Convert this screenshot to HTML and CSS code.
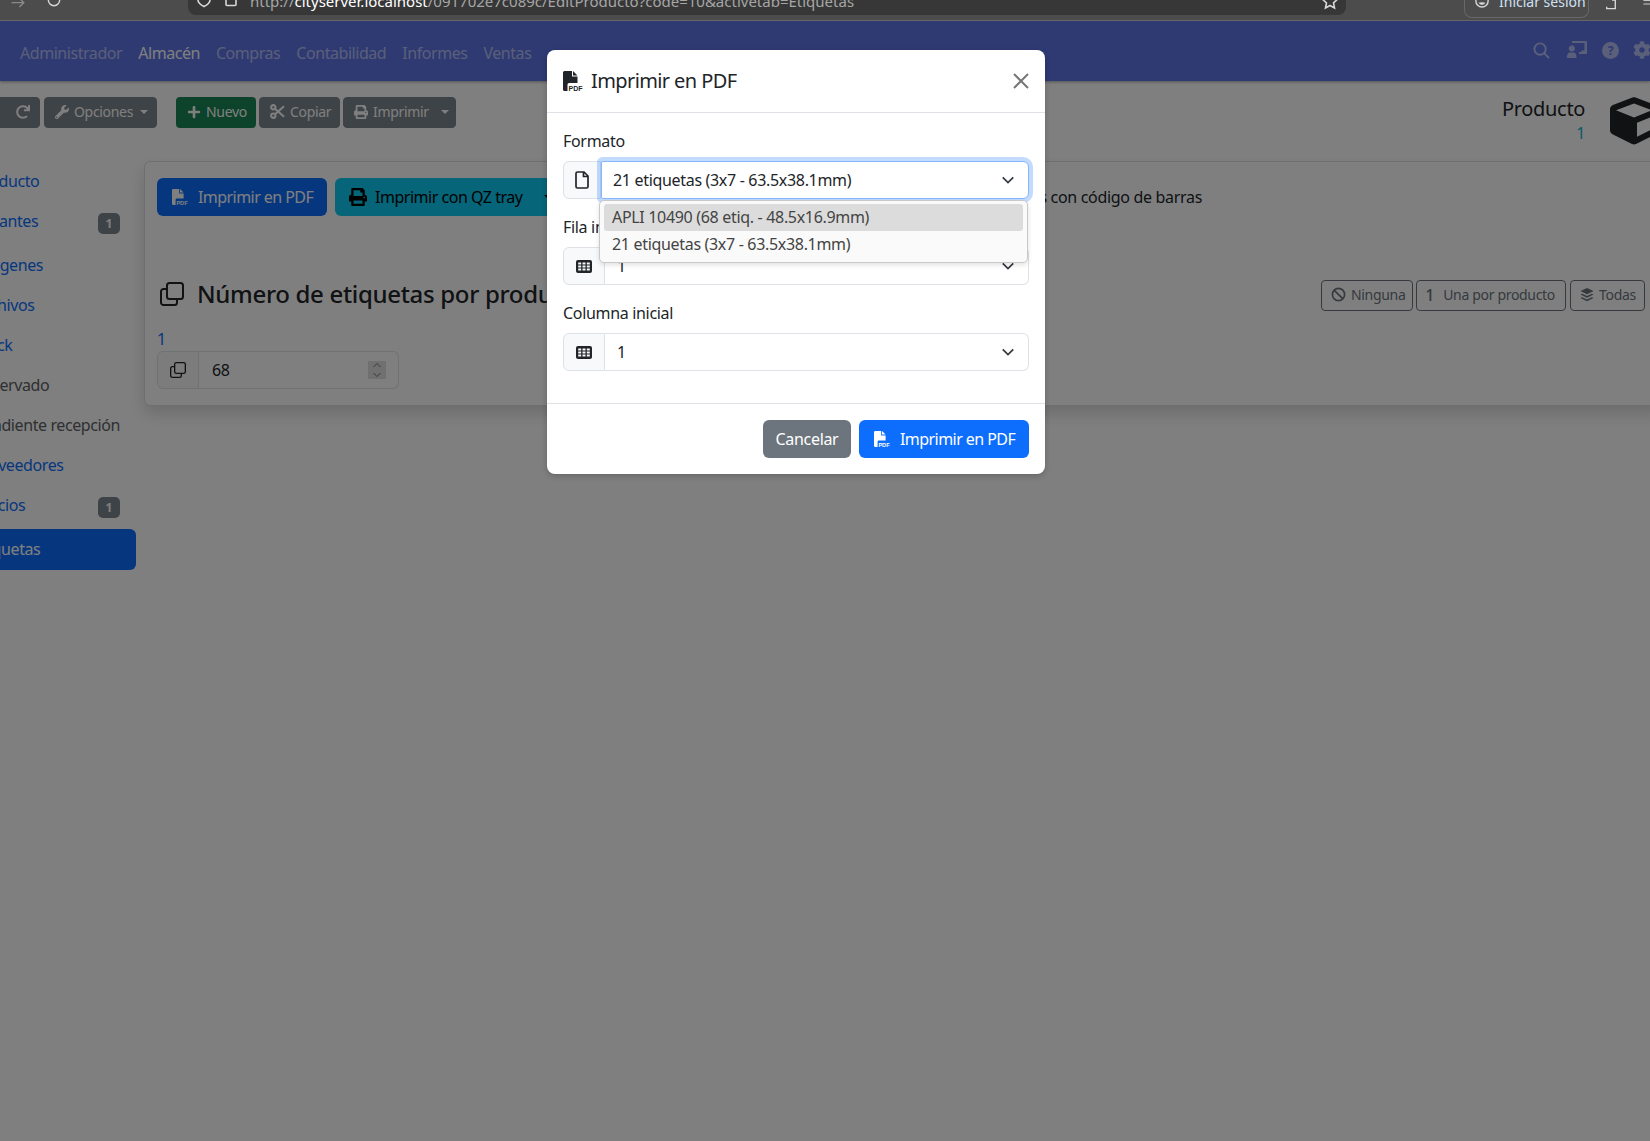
FILE: index.html
```html
<!DOCTYPE html>
<html lang="es">
<head>
<meta charset="utf-8">
<title>Producto</title>
<link rel="stylesheet" href="styles.css">
</head>
<body>
<header class="chrome">
  <svg class="c-ico c-arrow" viewBox="0 0 16 16"><path d="M0 3h14M9-2l5 5-5 5"/></svg>
  <svg class="c-ico c-reload" viewBox="0 0 16 16"><circle cx="8" cy="0" r="6.5"/></svg>
  <div class="urlbar">
    <svg class="c-ico c-shield" viewBox="0 0 16 16"><path d="M2-6h12v6c0 3-3 5-6 6.500C5 5 2 3 2 0z"/></svg>
    <svg class="c-ico c-page" viewBox="0 0 12 16"><path d="M1-4v8.500q0 1 1 1h8q1 0 1-1V-4"/></svg>
    <span class="url">http://<b>cityserver.localhost</b>/091702e7c089c/EditProducto?code=10&amp;activetab=Etiquetas</span>
    <svg class="c-ico c-star" viewBox="0 0 16 16"><path d="M8-6l2.200 5 5 .5-3.700 3.400 1 5L8 5.500 3.500 8l1-5L.8-.5l5-.5z"/></svg>
  </div>
  <div class="login"><svg class="c-ico c-user" viewBox="0 0 16 16"><circle cx="8" cy="1" r="7"/><path class="c-fill" d="M4 3q4 5 8 0-4-1-8 0z"/></svg><span>Iniciar sesión</span></div>
  <svg class="c-ico c-ext" viewBox="0 0 14 14"><path d="M9-2v2h3v10H2V8"/></svg>
  <svg class="c-ico c-menu" viewBox="0 0 16 14"><path d="M0 1h16M0 7h16"/></svg>
</header>

<div class="app">
  <nav class="navbar">
    <a class="nav-link">Administrador</a>
    <a class="nav-link active">Almacén</a>
    <a class="nav-link">Compras</a>
    <a class="nav-link">Contabilidad</a>
    <a class="nav-link">Informes</a>
    <a class="nav-link">Ventas</a>
    <div class="nav-icons">
      <svg class="n-ico n-search" viewBox="0 0 18 18"><circle cx="7.500" cy="7.500" r="6"/><path d="M12 12l5 5"/></svg>
      <svg class="n-ico-f n-board" viewBox="0 0 20 18"><circle cx="4.800" cy="7.500" r="3"/><path d="M0 16.500q0-5 3-5h3.500q3 0 3 5v.5H0z"/><path d="M5 0h14q1 0 1 1v11q0 1-1 1h-7v-2h2.500v-1.500h3V2H5z"/></svg>
      <svg class="n-ico-f n-help" viewBox="0 0 18 18"><circle cx="9" cy="9" r="9"/><text class="n-q" x="9" y="13.500">?</text></svg>
      <svg class="n-ico-f n-cog" viewBox="0 0 512 512"><path d="M487.4 315.7l-42.600-24.600c4.300-23.200 4.300-47 0-70.200l42.600-24.600c4.900-2.800 7.100-8.600 5.500-14-11.100-35.600-30-67.800-54.700-94.600-3.800-4.100-10-5.100-14.800-2.300L380.800 110c-17.900-15.400-38.500-27.300-60.800-35.100V25.800c0-5.600-3.900-10.500-9.400-11.700-36.700-8.200-74.300-7.800-109.200 0-5.500 1.200-9.400 6.100-9.400 11.700V75c-22.200 7.900-42.800 19.800-60.800 35.100L88.700 85.500c-4.900-2.800-11-1.900-14.800 2.300-24.700 26.700-43.600 58.900-54.700 94.600-1.700 5.400.6 11.200 5.500 14L67.300 221c-4.300 23.200-4.300 47 0 70.200l-42.600 24.600c-4.900 2.800-7.100 8.600-5.500 14 11.100 35.600 30 67.800 54.700 94.600 3.800 4.100 10 5.100 14.800 2.300l42.600-24.600c17.900 15.400 38.500 27.300 60.800 35.100v49.200c0 5.600 3.900 10.500 9.400 11.700 36.700 8.200 74.300 7.800 109.200 0 5.500-1.200 9.400-6.100 9.400-11.700v-49.200c22.200-7.900 42.800-19.800 60.800-35.100l42.600 24.600c4.900 2.800 11 1.900 14.800-2.300 24.700-26.700 43.600-58.900 54.700-94.600 1.500-5.500-.7-11.300-5.600-14.100zM256 336c-44.100 0-80-35.900-80-80s35.900-80 80-80 80 35.900 80 80-35.900 80-80 80z"/></svg>
    </div>
  </nav>

  <main class="page">
    <div class="toolbar">
      <button class="btn btn-dark btn-sm btn-refresh"><svg class="ico" viewBox="0 0 512 512"><path d="M500.330 0h-47.410a12 12 0 0 0-12 12.570l4 82.760A247.420 247.420 0 0 0 256 8C119.340 8 8.900 119.530 8 256.190 7.100 393.070 117.820 504 256 504a247.100 247.100 0 0 0 166.180-63.910 12 12 0 0 0 .48-17.430l-34-34a12 12 0 0 0-16.380-.55A176 176 0 1 1 402.100 157.800l-101.530-4.870a12 12 0 0 0-12.570 12v47.410a12 12 0 0 0 12 12h200.330a12 12 0 0 0 12-12V12a12 12 0 0 0-12-12z"/></svg></button>
      <button class="btn btn-dark btn-sm btn-opciones"><svg class="ico" viewBox="0 0 512 512"><path d="M507.730 109.100c-2.240-9.030-13.540-12.090-20.120-5.510l-74.360 74.360-67.880-11.310-11.310-67.880 74.360-74.360c6.620-6.620 3.430-17.900-5.660-20.160-47.380-11.740-99.550.91-136.580 37.930-39.640 39.640-50.550 97.100-34.050 147.200L18.740 402.760c-24.990 24.990-24.990 65.510 0 90.500 24.990 24.990 65.510 24.990 90.500 0l213.210-213.210c50.120 16.710 107.470 5.680 147.370-34.220 37.070-37.070 49.700-89.320 37.910-136.730zM64 472c-13.250 0-24-10.750-24-24 0-13.260 10.750-24 24-24s24 10.740 24 24c0 13.250-10.750 24-24 24z"/></svg>Opciones<i class="caret"></i></button>
      <button class="btn btn-green btn-sm btn-nuevo"><svg class="ico" viewBox="0 0 448 512"><path d="M416 208H272V64c0-17.670-14.330-32-32-32h-32c-17.670 0-32 14.330-32 32v144H32c-17.670 0-32 14.330-32 32v32c0 17.670 14.330 32 32 32h144v144c0 17.670 14.330 32 32 32h32c17.670 0 32-14.330 32-32V304h144c17.670 0 32-14.330 32-32v-32c0-17.670-14.330-32-32-32z"/></svg>Nuevo</button>
      <button class="btn btn-dark btn-sm btn-copiar"><svg class="ico-s ico-cut" viewBox="0 0 16 16"><circle cx="3.500" cy="3.500" r="2.300"/><circle cx="3.500" cy="12.500" r="2.300"/><path d="M5.300 5l9.700 8.500M5.300 11L15 2.500"/></svg>Copiar</button>
      <button class="btn btn-dark btn-sm btn-imprimir"><svg class="ico" viewBox="0 0 512 512"><path d="M448 192V77.250c0-8.490-3.370-16.620-9.370-22.630L393.370 9.370c-6-6-14.140-9.370-22.630-9.370H96C78.330 0 64 14.330 64 32v160c-35.350 0-64 28.650-64 64v112c0 8.840 7.160 16 16 16h48v96c0 17.670 14.330 32 32 32h320c17.670 0 32-14.330 32-32v-96h48c8.840 0 16-7.160 16-16V256c0-35.350-28.650-64-64-64zm-64 256H128v-96h256v96zm0-224H128V64h192v48c0 8.840 7.160 16 16 16h48v96zm48 72c-13.250 0-24-10.750-24-24 0-13.260 10.750-24 24-24s24 10.740 24 24c0 13.250-10.750 24-24 24z"/></svg>Imprimir<i class="caret caret-far"></i></button>
      <div class="doc-title">
        <div class="doc-text"><div class="doc-name">Producto</div><div class="doc-code">1</div></div>
        <svg class="cube" viewBox="0 0 512 512"><path d="M239.100 6.300l-208 78c-18.700 7-31.100 25-31.100 45v225.100c0 18.200 10.300 34.800 26.500 42.900l208 104c13.500 6.800 29.400 6.800 42.900 0l208-104c16.300-8.100 26.500-24.800 26.500-42.900V129.300c0-20-12.400-37.900-31.100-44.900l-208-78C262 2.200 250 2.200 239.100 6.300zM256 68.400l192 72v1.100l-192 78-192-78v-1.100l192-72zm32 356V275.500l160-65v133.900l-160 80z"/></svg>
      </div>
    </div>

    <div class="columns">
      <ul class="side">
        <li class="side-item link"><span>Producto</span></li>
        <li class="side-item link tall nudge"><span>Variantes</span><b class="badge">1</b></li>
        <li class="side-item link nudge"><span>Imágenes</span></li>
        <li class="side-item link"><span>Archivos</span></li>
        <li class="side-item link"><span>Stock</span></li>
        <li class="side-item"><span>Reservado</span></li>
        <li class="side-item"><span>Pendiente recepción</span></li>
        <li class="side-item link"><span>Proveedores</span></li>
        <li class="side-item link tall"><span>Precios</span><b class="badge">1</b></li>
        <li class="side-item current"><span>Etiquetas</span></li>
      </ul>

      <section class="panel">
        <div class="print-row">
          <button class="btn btn-primary btn-pdf">
            <svg class="pdf" viewBox="0 0 20 20"><path d="M1.500 0H9v5.500h5.500V12H6q-1.500 0-1.500 1.500V20H1.500Q0 20 0 18.500V1.500Q0 0 1.500 0zM10 0l4.500 4.500H10z"/><text x="5.500" y="19.500">PDF</text></svg>Imprimir en PDF</button>
          <button class="btn btn-info btn-qz"><svg class="ico-l" viewBox="0 0 512 512"><path d="M448 192V77.250c0-8.490-3.370-16.620-9.370-22.630L393.370 9.370c-6-6-14.140-9.370-22.630-9.370H96C78.330 0 64 14.330 64 32v160c-35.350 0-64 28.650-64 64v112c0 8.840 7.160 16 16 16h48v96c0 17.670 14.330 32 32 32h320c17.670 0 32-14.330 32-32v-96h48c8.840 0 16-7.160 16-16V256c0-35.350-28.650-64-64-64zm-64 256H128v-96h256v96zm0-224H128V64h192v48c0 8.840 7.160 16 16 16h48v96zm48 72c-13.250 0-24-10.750-24-24 0-13.260 10.750-24 24-24s24 10.740 24 24c0 13.250-10.750 24-24 24z"/></svg>Imprimir con QZ tray<i class="caret caret-dark"></i></button>
          <span class="hint">Imprimir etiquetas con código de barras</span>
        </div>

        <div class="title-row">
          <h2 class="heading"><svg class="clone clone-l" viewBox="0 0 24 24"><rect x="7" y="1" width="16" height="16" rx="2.500"/><path d="M7 7H3.500A2.500 2.500 0 0 0 1 9.500v11A2.500 2.500 0 0 0 3.500 23h11a2.500 2.500 0 0 0 2.500-2.500V17"/></svg>Número de etiquetas por producto</h2>
          <div class="qty-btns">
            <button class="btn btn-outline btn-sm"><svg class="ico-s" viewBox="0 0 16 16"><circle cx="8" cy="8" r="6.500"/><path d="M3.500 3.500l9 9"/></svg>Ninguna</button>
            <button class="btn btn-outline btn-sm"><span class="one">1</span>Una por producto</button>
            <button class="btn btn-outline btn-sm"><svg class="ico" viewBox="0 0 16 16"><path d="M8 0l7.500 3.500L8 7 .5 3.500zM2.500 6.500L8 9l5.500-2.500 2 1L8 11 .5 7.500zM2.500 10.500L8 13l5.500-2.500 2 1L8 15 .5 11.500z"/></svg>Todas</button>
          </div>
        </div>

        <a class="qty-label">1</a>
        <div class="input-group qty">
          <span class="addon"><svg class="clone" viewBox="0 0 24 24"><rect x="7" y="1" width="16" height="16" rx="2.500"/><path d="M7 7H3.500A2.500 2.500 0 0 0 1 9.500v11A2.500 2.500 0 0 0 3.500 23h11a2.500 2.500 0 0 0 2.500-2.500V17"/></svg></span>
          <span class="field">68<span class="spin"><svg viewBox="0 0 10 18"><path d="M1.500 6L5 2.500 8.500 6M1.500 12L5 15.500 8.500 12"/></svg></span></span>
        </div>
      </section>
    </div>
  </main>

  <div class="backdrop">
    <div class="modal">
      <div class="modal-head">
        <svg class="pdf pdf-dark" viewBox="0 0 20 20"><path d="M1.500 0H9v5.500h5.500V12H6q-1.500 0-1.500 1.500V20H1.500Q0 20 0 18.500V1.500Q0 0 1.500 0zM10 0l4.500 4.500H10z"/><text x="5.500" y="19.500">PDF</text></svg>
        <h5 class="modal-title">Imprimir en PDF</h5>
        <svg class="close" viewBox="0 0 16 16"><path d="M1 1l14 14M15 1L1 15"/></svg>
      </div>
      <div class="modal-body">
        <label class="form-label">Formato</label>
        <div class="input-group open">
          <span class="addon addon-narrow"><svg class="file" viewBox="0 0 14 18"><path d="M2.500 1H9l4 4v10.500a1.500 1.500 0 0 1-1.500 1.500h-9A1.500 1.500 0 0 1 1 15.500v-13A1.500 1.500 0 0 1 2.500 1zM8.500 1v4.500H13"/></svg></span>
          <span class="select focus">21 etiquetas (3x7 - 63.5x38.1mm)<svg class="chev" viewBox="0 0 16 16"><path d="M2 5l6 6 6-6"/></svg></span>
          <div class="options">
            <div class="option selected">APLI 10490 (68 etiq. - 48.5x16.9mm)</div>
            <div class="option">21 etiquetas (3x7 - 63.5x38.1mm)</div>
          </div>
        </div>
        <label class="form-label">Fila inicial</label>
        <div class="input-group">
          <span class="addon"><svg class="table" viewBox="0 0 16 13"><rect width="16" height="13" rx="2"/><path class="cells" d="M2.200 2.600h3v1.800h-3zM6.500 2.600h3v1.800h-3zM10.800 2.600h3v1.800h-3zM2.200 5.600h3v1.800h-3zM6.500 5.600h3v1.800h-3zM10.800 5.600h3v1.800h-3zM2.200 8.600h3v1.800h-3zM6.500 8.600h3v1.800h-3zM10.800 8.600h3v1.800h-3z"/></svg></span>
          <span class="select">1<svg class="chev" viewBox="0 0 16 16"><path d="M2 5l6 6 6-6"/></svg></span>
        </div>
        <label class="form-label">Columna inicial</label>
        <div class="input-group">
          <span class="addon"><svg class="table" viewBox="0 0 16 13"><rect width="16" height="13" rx="2"/><path class="cells" d="M2.200 2.600h3v1.800h-3zM6.500 2.600h3v1.800h-3zM10.800 2.600h3v1.800h-3zM2.200 5.600h3v1.800h-3zM6.500 5.600h3v1.800h-3zM10.800 5.600h3v1.800h-3zM2.200 8.600h3v1.800h-3zM6.500 8.600h3v1.800h-3zM10.800 8.600h3v1.800h-3z"/></svg></span>
          <span class="select">1<svg class="chev" viewBox="0 0 16 16"><path d="M2 5l6 6 6-6"/></svg></span>
        </div>
      </div>
      <div class="modal-foot">
        <button class="btn btn-gray">Cancelar</button>
        <button class="btn btn-blue"><svg class="pdf" viewBox="0 0 20 20"><path d="M1.500 0H9v5.500h5.500V12H6q-1.500 0-1.500 1.500V20H1.500Q0 20 0 18.500V1.500Q0 0 1.500 0zM10 0l4.500 4.500H10z"/><text x="5.500" y="19.500">PDF</text></svg>Imprimir en PDF</button>
      </div>
    </div>
  </div>
</div>
</body>
</html>
```

FILE: styles.css
```css
* { box-sizing: border-box; }
html, body { margin: 0; height: 1141px; overflow: hidden; }
body { font-family: "Noto Sans", "Open Sans", sans-serif; font-size: 16px; line-height: 24px; letter-spacing: -0.02em; color: #212529; background: #fff; }

/* browser chrome, cut by the top of the shot */
.chrome { height: 21px; background: #4c4c4c; border-bottom: 1px solid #666; display: flex; align-items: flex-start; overflow: hidden; }
.c-ico { fill: none; stroke: #d8d8d8; stroke-width: 1.6; overflow: visible; flex: none; }
.c-fill { fill: #d8d8d8; stroke: none; }
.c-arrow { width: 15px; height: 14px; margin-left: 11px; stroke: #8a8a8a; }
.c-reload { width: 16px; height: 14px; margin-left: 20px; }
.urlbar { flex: none; margin-left: 126px; width: 1158px; height: 15px; background: #373737; border-radius: 0 0 8px 8px; display: flex; align-items: flex-end; padding: 0 0 6px 8px; overflow: hidden; }
.c-shield { width: 16px; height: 16px; margin-bottom: -6px; align-self: flex-start; }
.c-page { width: 12px; height: 16px; margin-left: 13px; align-self: flex-start; margin-bottom: -6px; }
.url { margin-left: 13px; font-size: 15px; line-height: 16px; color: #a6a6a6; white-space: nowrap; letter-spacing: 0; }
.url b { font-weight: 400; color: #fff; }
.c-star { width: 16px; height: 16px; margin-left: auto; margin-right: 8px; align-self: flex-start; }
.login { flex: none; margin-left: 118px; width: 125px; height: 18px; border: 1px solid #686868; border-top: 0; border-radius: 0 0 8px 8px; display: flex; align-items: flex-end; padding: 0 0 8px 9px; color: #cfe0f5; font-size: 14px; line-height: 14px; overflow: hidden; white-space: nowrap; }
.c-user { width: 16px; height: 14px; margin-right: 9px; align-self: flex-start; }
.login span { letter-spacing: 0; }
.c-ext { width: 14px; height: 12px; margin-left: 15px; }
.c-menu { width: 16px; height: 8px; margin-left: 22px; }

/* app */
.app { position: relative; height: 1120px; overflow: hidden; background: #fff; }
.navbar { height: 60px; background: #5e74e6; display: flex; align-items: center; padding: 4px 0 0 12px; box-shadow: 0 1px 3px rgba(0,0,0,.35); }
.nav-link { padding: 0 8px; color: rgba(255,255,255,.55); white-space: nowrap; letter-spacing: -0.028em; }
.nav-link.active { color: #fff; }
.nav-icons { margin-left: auto; display: flex; align-items: center; margin-right: -1px; padding-bottom: 6px; }
.n-ico, .n-ico-f { flex: none; overflow: visible; }
.n-ico { fill: none; stroke: rgba(255,255,255,.55); stroke-width: 2; }
.n-ico-f { fill: rgba(255,255,255,.55); }
.n-search { width: 17px; height: 17px; margin-right: 17px; }
.n-board { width: 20px; height: 18px; margin-right: 15px; }
.n-help { width: 17px; height: 17px; margin-right: 14px; }
.n-cog { width: 18px; height: 18px; }
.n-q { fill: #5e74e6; font: 700 13px "Noto Sans", sans-serif; text-anchor: middle; }

.page { margin-left: -42px; width: 1700px; padding-top: 16px; }

.btn { font: inherit; letter-spacing: inherit; height: 38px; border: 1px solid transparent; border-radius: 6px; display: inline-flex; align-items: center; white-space: nowrap; padding: 0 12px; flex: none; color: #fff; }
.btn-sm { height: 31px; font-size: 14px; padding: 0 10px 2px; border-radius: 4px; }
.btn-dark { background: #7b848c; color: #fff; border-color: #7b848c; }
.toolbar .btn-dark { background: #7d868e; }
.btn-green { background: #198754; }
.ico { width: 14px; height: 14px; fill: currentColor; margin-right: 5px; flex: none; }
.ico-s { width: 15px; height: 15px; fill: none; stroke: currentColor; stroke-width: 1.800; margin-right: 5px; flex: none; }
.ico-cut { stroke-width: 2.200; }
.caret { width: 0; height: 0; border: 4px solid transparent; border-top-color: currentColor; border-bottom: 0; margin-left: 7px; flex: none; }
.caret-far { margin-left: auto; margin-right: -4px; }
.caret-dark { color: #000; margin-left: 22px; }

.toolbar { display: flex; align-items: flex-start; height: 64px; }
.btn-refresh { width: 82px; justify-content: flex-end; padding-right: 9px; margin-right: 4px; }
.btn-refresh .ico { margin: 0; }
.btn-opciones { width: 113px; margin-right: 19px; }
.btn-nuevo { width: 80px; margin-right: 3px; padding-left: 10px; }
.btn-copiar { width: 81px; margin-right: 3px; }
.btn-imprimir { width: 113px; }
.doc-title { margin-left: 1046px; display: flex; align-items: flex-start; }
.doc-text { text-align: right; width: 83px; }
.doc-name { font-size: 20px; line-height: 24px; white-space: nowrap; }
.doc-code { line-height: 24px; color: #14b5d0; }
.cube { width: 48px; height: 48px; margin-left: 25px; fill: #212529; flex: none; }

.columns { display: flex; align-items: flex-start; }
.side { list-style: none; margin: 0; padding: 0; width: 178px; flex: none; margin-right: 8px; }
.side-item { height: 40px; padding: 8px 16px; display: flex; justify-content: space-between; align-items: flex-start; color: #5c6166; white-space: nowrap; letter-spacing: -0.025em; }
.side-item.link { color: #0d6efd; }
.side-item.nudge { padding-left: 13.500px; }
.side-item.tall { height: 44px; padding-right: 16px; }
.side-item.current { height: 41px; background: #0d6efd; color: #fff; border-radius: 0 6px 6px 0; }
.badge { width: 22px; height: 21px; margin-top: 4px; border-radius: 5px; background: #7d868e; color: #fff; font-size: 12px; line-height: 21px; font-weight: 700; text-align: center; letter-spacing: 0; }

.panel { width: 1520px; flex: none; height: 245px; border: 1px solid rgba(0,0,0,.125); border-radius: 6px; padding: 16px 12px; background: #fff; box-shadow: 0 8px 16px rgba(0,0,0,.15); }
.print-row { display: flex; align-items: center; width: 1045px; height: 38px; }
.btn-primary { background: #0d6efd; color: #fff; }
.btn-pdf { width: 170px; margin-right: 8px; padding-left: 14px; letter-spacing: -0.035em; }
.btn-qz { width: 236px; background: #0dcaf0; color: #000; padding-left: 13px; letter-spacing: -0.03em; }
.ico-l { width: 18px; height: 18px; fill: currentColor; margin-right: 8px; }
.hint { margin-left: auto; white-space: nowrap; }
.pdf { width: 20px; height: 20px; fill: currentColor; margin-right: 8px; flex: none; overflow: visible; }
.pdf text { font: 700 7px "Liberation Sans", sans-serif; letter-spacing: 0; }
.btn .pdf { width: 16px; height: 16px; margin-right: 10px; }
.pdf-dark { color: #212529; }

.title-row { margin-top: 64px; height: 31px; display: flex; align-items: center; justify-content: space-between; }
.heading { margin: -3px 0 0; font-size: 24px; font-weight: 500; line-height: 30px; display: flex; align-items: center; white-space: nowrap; }
.clone { width: 16px; height: 16px; fill: none; stroke: currentColor; stroke-width: 2; }
.clone-l { width: 24px; height: 24px; margin: 0 13px 0 3px; }
.qty-btns { display: flex; gap: 3px; width: 330px; }
.btn-outline { background: transparent; color: #6c757d; border-color: #6c757d; }
.btn-outline:nth-child(1) { width: 92px; padding-left: 9px; }
.btn-outline:nth-child(2) { width: 150px; margin-right: 1px; padding-left: 8px; }
.btn-outline:nth-child(3) { width: 75px; padding-left: 9px; }
.one { width: 18px; font-size: 16px; margin-right: 9px; text-align: center; font-weight: 500; }

.qty-label { display: block; margin-top: 16px; color: #0d6efd; line-height: 24px; }
.input-group { display: flex; height: 38px; position: relative; }
.qty { width: 242px; height: 38px; }
.addon { width: 42px; flex: none; display: flex; align-items: center; justify-content: center; background: #f8f9fa; border: 1px solid #dee2e6; border-radius: 6px 0 0 6px; }
.addon-narrow { width: 38px; }
.field { flex: 1; border: 1px solid #dee2e6; border-left: 0; border-radius: 0 6px 6px 0; padding: 0 12px 0 13px; display: flex; align-items: center; justify-content: space-between; }
.spin { width: 18px; height: 18px; background: #e0e0e0; display: flex; }
.spin svg { width: 100%; height: 100%; fill: none; stroke: #6c757d; stroke-width: 1; }

/* modal */
.backdrop { position: absolute; inset: 0; background: rgba(0,0,0,.5); padding: 29px 0 0 547px; }
.modal { width: 498px; background: #fff; border-radius: 8px; box-shadow: 0 2px 6px rgba(0,0,0,.2); }
.modal-head { height: 63px; border-bottom: 1px solid #dee2e6; display: flex; align-items: center; padding: 0 16px; }
.modal-title { margin: 0; font-size: 20px; font-weight: 400; line-height: 30px; flex: 1; letter-spacing: -0.03em; }
.close { width: 16px; height: 16px; fill: none; stroke: #777; stroke-width: 2; }
.modal-body { padding: 16px; display: flex; flex-direction: column; height: 290px; }
.form-label { display: block; margin-bottom: 8px; line-height: 24px; }
.input-group { margin-bottom: 16px; flex: none; }
.qty { margin-bottom: 0; }
.select { flex: 1; background: #fff; border: 1px solid #dee2e6; border-left: 0; border-radius: 0 6px 6px 0; padding: 0 12px; display: flex; align-items: center; justify-content: space-between; white-space: nowrap; }
.select.focus { border: 1px solid #86b7fe; border-radius: 2px 6px 6px 2px; box-shadow: 0 0 0 4px rgba(13,110,253,.25); position: relative; padding-left: 11px; }
.chev { width: 14px; height: 14px; fill: none; stroke: #343a40; stroke-width: 2; flex: none; margin-right: 1px; }
.file { width: 14px; height: 18px; fill: none; stroke: #212529; stroke-width: 1.700; }
.table { width: 16px; height: 13px; fill: #212529; }
.cells { fill: #f8f9fa; }
.options { position: absolute; z-index: 2; left: 36px; top: 39px; width: 429px; height: 63px; background: #fafafa; border: 1px solid #c9c9c9; border-radius: 5px; padding: 3px 4px; box-shadow: 0 2px 5px rgba(0,0,0,.12); }
.option { height: 27px; line-height: 27px; padding: 0 8px; border-radius: 3px; color: #444; white-space: nowrap; }
.option.selected { background: #dcdcdc; }
.modal-foot { height: 71px; border-top: 1px solid #dee2e6; display: flex; align-items: flex-start; justify-content: flex-end; gap: 8px; padding: 16px 16px 0; }
.btn-gray { background: #6c757d; width: 88px; justify-content: center; }
.btn-blue { background: #0d6efd; width: 170px; padding-left: 14px; letter-spacing: -0.035em; }
```
